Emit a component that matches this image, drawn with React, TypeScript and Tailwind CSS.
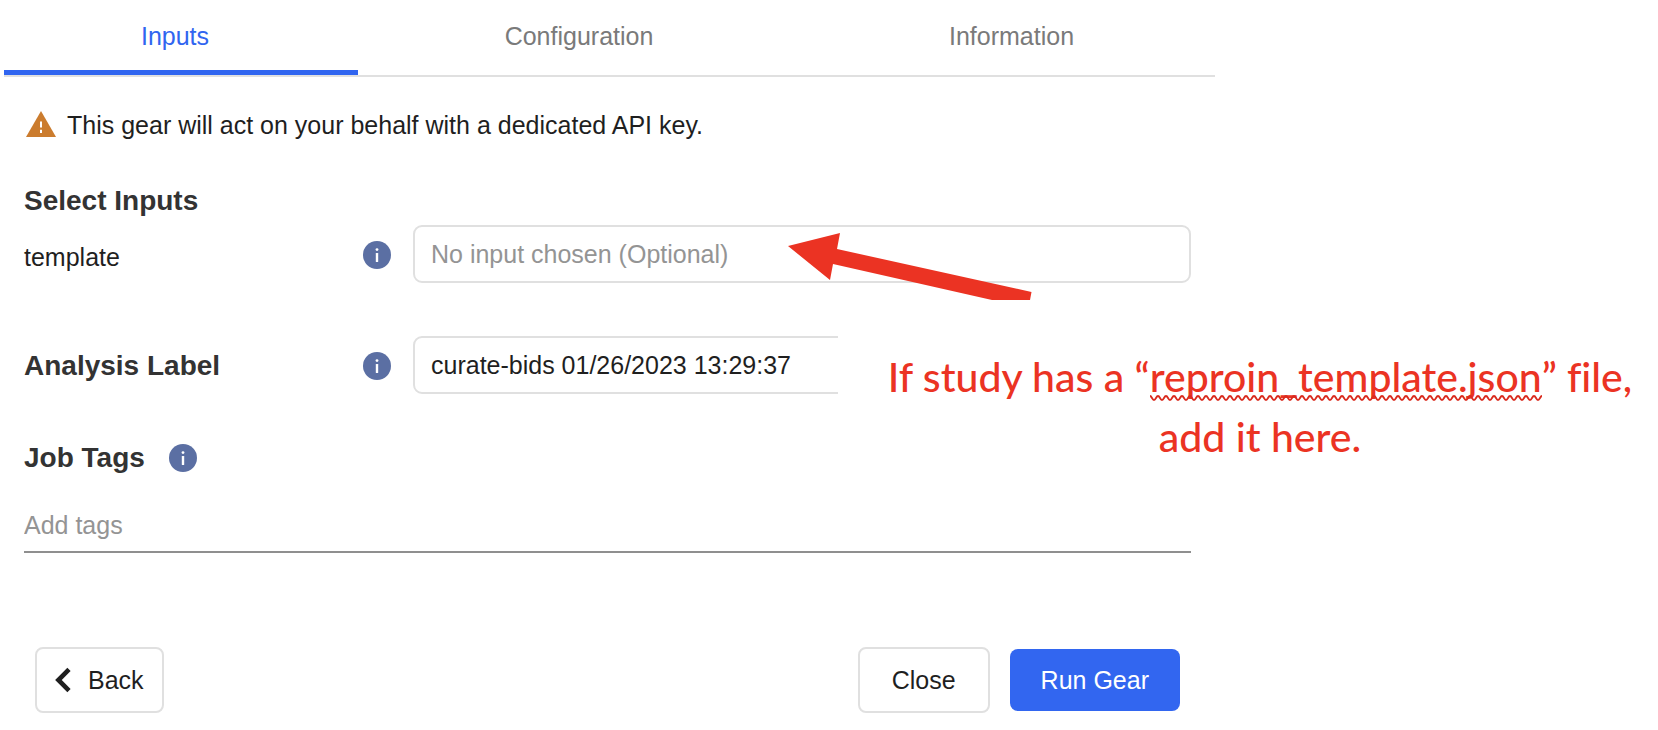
import { useState } from "react";

function InfoIcon() {
  return (
    <svg viewBox="0 0 28 28" className="size-7 shrink-0" role="img" aria-label="More information">
      <circle cx="14" cy="14" r="14" fill="#5b6fa3" />
      <circle cx="14" cy="8.6" r="1.4" fill="#fff" />
      <rect x="12.8" y="12" width="2.4" height="9" rx="0.6" fill="#fff" />
    </svg>
  );
}

function WarningIcon() {
  return (
    <svg viewBox="0 0 30 28" className="h-7 w-[30px] shrink-0" aria-hidden="true">
      <path d="M15 2 30 28H0z" fill="#cb7c2e" />
      <path d="M15 12.4v6M15 20.8v3.2" stroke="#fff" strokeWidth="2" fill="none" />
    </svg>
  );
}

function ChevronLeft() {
  return (
    <svg viewBox="0 0 16 26" className="h-[26px] w-4 shrink-0" aria-hidden="true">
      <path d="M14 2.4 3.4 13 14 23.6" stroke="#1f1f1f" strokeWidth="4.6" fill="none" />
    </svg>
  );
}

function Squiggle() {
  return (
    <svg className="absolute top-full left-0 -mt-3 h-[6px] w-full" aria-hidden="true">
      <defs>
        <pattern id="wave" width="8" height="6" patternUnits="userSpaceOnUse">
          <path d="M-2 3Q0 -1 2 3T6 3T10 3" stroke="#d92b1e" strokeWidth="1.8" fill="none" />
        </pattern>
      </defs>
      <rect width="100%" height="6" fill="url(#wave)" />
    </svg>
  );
}

const tabs = [
  { name: "Inputs", layout: "pr-3" },
  { name: "Configuration", layout: "" },
  { name: "Information", layout: "pl-2" },
];

export default function App() {
  const [active, setActive] = useState("Inputs");
  const [label, setLabel] = useState("curate-bids 01/26/2023 13:29:37");

  return (
    <div className="relative min-h-screen overflow-hidden bg-white font-['Liberation_Sans',Arial,sans-serif] text-[25px] leading-8 text-[#1f1f1f]">
      <main className="max-w-[1215px] pl-1">
        <div role="tablist" className="grid grid-cols-[354fr_442fr_415fr] border-b-2 border-[#e0e0e0]">
          {tabs.map((tab) => (
            <button
              key={tab.name}
              type="button"
              role="tab"
              aria-selected={active === tab.name}
              onClick={() => setActive(tab.name)}
              className={`h-[75px] border-b-5 pt-[2px] ${tab.layout} ${
                active === tab.name ? "border-[#3065f0] text-[#3065f0]" : "border-transparent text-[#7a7a7a]"
              }`}
            >
              {tab.name}
            </button>
          ))}
        </div>

        <form className="pr-6 pl-5" onSubmit={(e) => e.preventDefault()}>
          <p className="mt-8 flex items-start gap-[11px] pl-[2px]">
            <WarningIcon />
            This gear will act on your behalf with a dedicated API key.
          </p>

          <h2 className="mt-11 text-[28px] font-bold text-[#333333]">Select Inputs</h2>
          <div className="mt-2 flex items-center">
            <div className="flex w-[389px] shrink-0 items-center justify-between pt-[2px] pr-[22px]">
              <label htmlFor="template" className="pt-1">
                template
              </label>
              <InfoIcon />
            </div>
            <input
              id="template"
              placeholder="No input chosen (Optional)"
              className="h-[58px] min-w-0 flex-1 rounded-[9px] border-2 border-[#e0e0e0] px-4 placeholder:text-[#949494]"
            />
          </div>

          <div className="mt-[53px] flex items-center">
            <div className="flex w-[389px] shrink-0 items-center justify-between pt-[2px] pr-[22px]">
              <label htmlFor="label" className="text-[28px] font-bold text-[#333333]">
                Analysis Label
              </label>
              <InfoIcon />
            </div>
            <input
              id="label"
              value={label}
              onChange={(e) => setLabel(e.target.value)}
              className="h-[58px] min-w-0 flex-1 rounded-[9px] border-2 border-[#e0e0e0] px-4"
            />
          </div>

          <div className="mt-12 flex items-center gap-6">
            <label htmlFor="tags" className="text-[28px] font-bold text-[#333333]">
              Job Tags
            </label>
            <InfoIcon />
          </div>
          <input
            id="tags"
            placeholder="Add tags"
            className="mt-8 h-[47px] w-full border-b-2 border-[#8f8f8f] pb-[6px] placeholder:text-[#949494]"
          />

          <div className="mt-[94px] flex items-center gap-5 pr-[11px] pl-[11px]">
            <button type="button" className="mr-auto flex h-[66px] items-center gap-[17px] rounded-lg border-2 border-[#e0e0e0] px-[18px]">
              <ChevronLeft />
              Back
            </button>
            <button type="button" className="h-[66px] rounded-lg border-2 border-[#e0e0e0] px-8">
              Close
            </button>
            <button type="submit" className="h-[62px] rounded-lg bg-[#3266f0] px-[31px] text-white">
              Run Gear
            </button>
          </div>
        </form>
      </main>

      <svg viewBox="0 0 244 68" className="absolute top-[232px] left-[788px] h-[68px] w-[244px]" aria-hidden="true">
        <path d="M0 14 52 1 49 17 243.500 60 242 68H204L45 32 42 48z" fill="#eb3323" />
      </svg>
      <aside className="absolute top-[300px] left-[838px] w-[844px] bg-white py-[47px] text-center font-[Lato,sans-serif] text-[41px] leading-[60px] font-medium whitespace-nowrap text-[#eb3323] [font-variant-ligatures:none]">
        If study has a “
        <span className="relative inline-block">
          reproin_template.json
          <Squiggle />
        </span>
        ” file,
        <br />
        add it here.
      </aside>
    </div>
  );
}
